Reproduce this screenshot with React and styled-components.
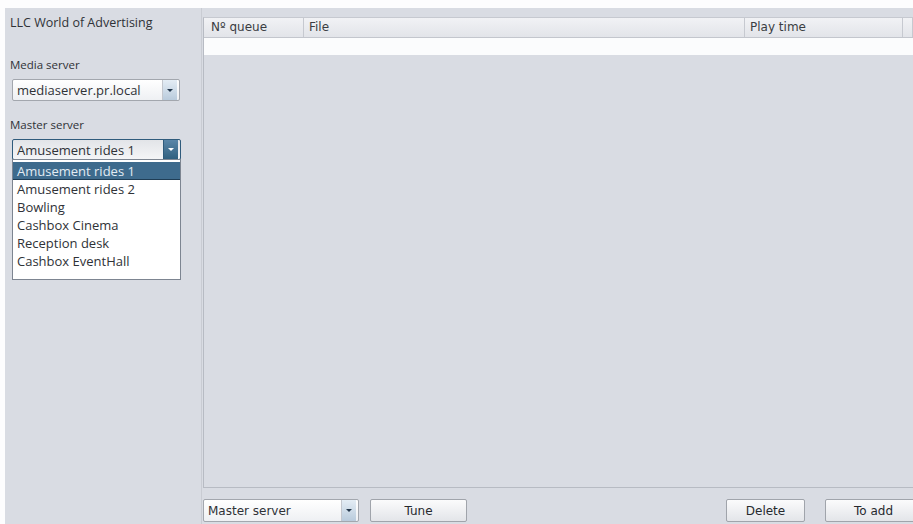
import React from 'react'
import styled, { createGlobalStyle } from 'styled-components'

const GlobalStyle = createGlobalStyle`
  html, body {
    margin: 0;
    padding: 0;
    background: #fdfdfe;
  }
  * { box-sizing: border-box; }
`

const Window = styled.div`
  width: 913px;
  height: 524px;
  padding: 8px 0 0 5px;
  overflow: hidden;
`

const Frame = styled.div`
  display: grid;
  grid-template-columns: 197px 1fr;
  grid-template-rows: 1fr 36px;
  height: 100%;
  background: #d9dce3;
  font-family: "Open Sans", "Lato", sans-serif;
  color: #2f3237;
`

const Sidebar = styled.aside`
  grid-row: 1 / span 2;
  display: flex;
  flex-direction: column;
  padding: 7px 0 0 5px;
  border-right: 1px solid #c9ccd3;
  position: relative;
`

const Title = styled.div`
  font-size: 12.5px;
  height: 16px;
  line-height: 16px;
  margin-bottom: 26px;
`

const Label = styled.div`
  font-size: 11.5px;
  line-height: 16px;
  margin-bottom: 6px;
`

const Combo = styled.div`
  position: relative;
  display: flex;
  align-items: center;
  width: ${p => p.$width}px;
  height: ${p => p.$height || 22}px;
  margin-left: ${p => p.$indent || 0}px;
  margin-bottom: ${p => p.$gap || 0}px;
  border: 1px solid ${p => (p.$focused ? '#2f5b7c' : '#a3a7ae')};
  border-radius: 2px;
  background: ${p =>
    p.$focused
      ? 'linear-gradient(#e2e4e8, #f4f5f7)'
      : 'linear-gradient(#ffffff, #eef0f3)'};
  font-size: ${p => p.$size || 13}px;
  font-family: ${p => p.$font || 'inherit'};
  padding-left: 4px;
`

const ComboText = styled.span`
  flex: 1;
  white-space: nowrap;
  overflow: hidden;
`

const ComboButton = styled.span`
  width: 15px;
  height: 100%;
  display: flex;
  align-items: center;
  justify-content: center;
  border-left: 1px solid ${p => (p.$focused ? '#2f5b7c' : '#c3c7ce')};
  background: ${p =>
    p.$focused
      ? 'linear-gradient(#5a86a8, #31607f)'
      : 'linear-gradient(#e4edf5, #b9cbdc)'};
  margin-right: 2px;
  &::after {
    content: '';
    border-left: 3px solid transparent;
    border-right: 3px solid transparent;
    border-top: 3px solid ${p => (p.$focused ? '#ffffff' : '#24384d')};
  }
`

const DropList = styled.ul`
  position: absolute;
  left: 7px;
  top: 151px;
  width: 169px;
  margin: 0;
  padding: 2px 0 9px;
  list-style: none;
  background: #ffffff;
  border: 1px solid #7d8591;
  font-size: 13px;
  z-index: 2;
`

const DropItem = styled.li`
  height: 18px;
  line-height: 18px;
  padding-left: 4px;
  white-space: nowrap;
  background: ${p => (p.$active ? '#3e6b8d' : 'transparent')};
  color: ${p => (p.$active ? '#e3ecf3' : '#2f3237')};
  border-bottom: ${p => (p.$active ? '1px solid #1f3d55' : 'none')};
`

const TablePanel = styled.section`
  margin-top: 9px;
  display: flex;
  flex-direction: column;
  border-left: 1px solid #b7bbc3;
  border-top: 1px solid #c6c9d0;
  border-bottom: 1px solid #b7bbc3;
  margin-left: 1px;
  font-family: "DejaVu Sans", "Liberation Sans", sans-serif;
`

const HeaderRow = styled.div`
  display: grid;
  grid-template-columns: 100px 1fr 158px 10px;
  height: 20px;
  background: linear-gradient(#f1f2f5, #e2e4e9);
  border-bottom: 1px solid #c3c6cd;
`

const HeaderCell = styled.div`
  font-size: 12px;
  line-height: 19px;
  padding-left: 5px;
  color: #3a3d42;
  border-right: 1px solid #c6c9d0;
  white-space: nowrap;
  &:first-child { padding-left: 7px; }
`

const EmptyRow = styled.div`
  height: 17px;
  background: #fbfcfd;
`

const TableBody = styled.div`
  flex: 1;
`

const BottomBar = styled.div`
  display: flex;
  align-items: flex-start;
  padding: 11px 0 0 1px;
  gap: 11px;
  font-family: "DejaVu Sans", "Liberation Sans", sans-serif;
`

const Button = styled.button`
  height: 23px;
  width: ${p => p.$width}px;
  margin-left: ${p => p.$push || 0}px;
  margin-right: ${p => p.$trim || 0}px;
  flex-shrink: 0;
  border: 1px solid #a0a4ab;
  border-radius: 2px;
  background: linear-gradient(#fbfbfc, #e3e5e9);
  font-family: inherit;
  font-size: 12px;
  color: #26292e;
  padding: 0;
`

const Spacer = styled.div`
  flex: 1;
`

const masterServers = [
  'Amusement rides 1',
  'Amusement rides 2',
  'Bowling',
  'Cashbox Cinema',
  'Reception desk',
  'Cashbox EventHall',
]

const App = () => {
  return (
    <>
      <GlobalStyle />
      <Window>
        <Frame>
          <Sidebar>
            <Title>LLC World of Advertising</Title>
            <Label>Media server</Label>
            <Combo $width={168} $indent={2} $gap={16}>
              <ComboText>mediaserver.pr.local</ComboText>
              <ComboButton />
            </Combo>
            <Label>Master server</Label>
            <Combo $width={169} $indent={2} $height={21} $focused>
              <ComboText>Amusement rides 1</ComboText>
              <ComboButton $focused />
            </Combo>
            <DropList>
              {masterServers.map((item, i) => (
                <DropItem key={item} $active={i === 0}>{item}</DropItem>
              ))}
            </DropList>
          </Sidebar>

          <TablePanel>
            <HeaderRow>
              <HeaderCell>Nº queue</HeaderCell>
              <HeaderCell>File</HeaderCell>
              <HeaderCell>Play time</HeaderCell>
              <HeaderCell />
            </HeaderRow>
            <EmptyRow />
            <TableBody />
          </TablePanel>

          <BottomBar>
            <Combo $width={156} $height={23} $size={12} $font='inherit'>
              <ComboText>Master server</ComboText>
              <ComboButton />
            </Combo>
            <Button $width={97}>Tune</Button>
            <Spacer />
            <Button $width={79}>Delete</Button>
            <Button $width={97} $push={9} $trim={-9}>To add</Button>
          </BottomBar>
        </Frame>
      </Window>
    </>
  )
}

export default App
